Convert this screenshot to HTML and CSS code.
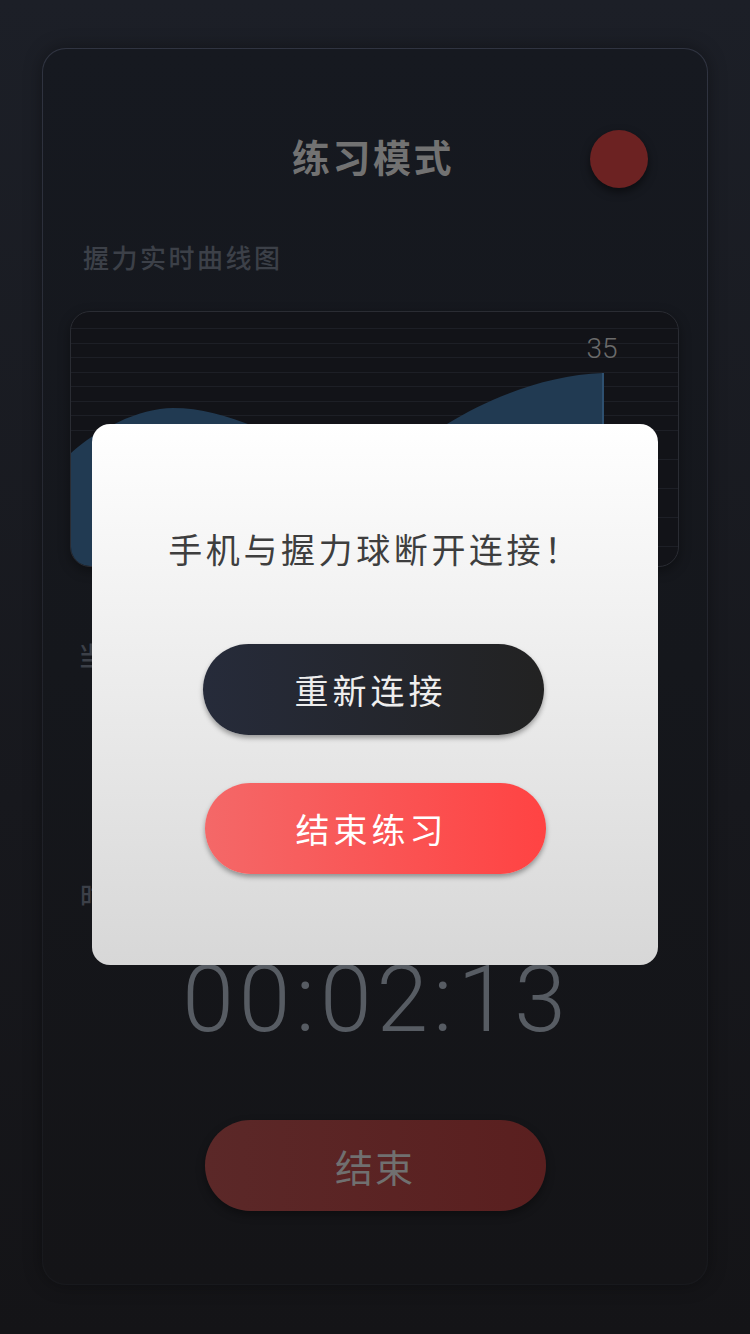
FILE: index.html
```html
<!DOCTYPE html>
<html lang="zh-CN">
<head>
<meta charset="utf-8">
<title>练习模式</title>
<link rel="stylesheet" href="styles.css">
</head>
<body>
<div class="page">
  <div class="card">
    <div class="header">
      <span class="spacer"></span>
      <h1 class="title">练习模式</h1>
      <span class="dot"></span>
    </div>
    <div class="label label-chart">握力实时曲线图</div>
    <div class="chart">
      <svg class="chart-svg" width="607" height="254" viewBox="0 0 607 254">
        <path class="area" d="M0,141 C25,118 68,96 102,96 C140,96 175,110 220,130 C262,150 300,152 340,134 C358,126 368,118 376,112 C420,85 476,63 532,61 L532,254 L0,254 Z"/>
        <line class="edge" x1="532" y1="61" x2="532" y2="254"/>
        <text class="peak" x="531" y="46" text-anchor="middle">35</text>
      </svg>
    </div>
    <div class="label label-force">当前握力</div>
    <div class="label label-time">时长</div>
    <div class="timer">00:02:13</div>
    <button class="end-btn">结束</button>
  </div>
</div>
<div class="overlay">
  <div class="modal">
    <p class="modal-msg">手机与握力球断开连接！</p>
    <button class="modal-btn reconnect">重新连接</button>
    <button class="modal-btn finish">结束练习</button>
  </div>
</div>
</body>
</html>
```
FILE: styles.css
```css
* { box-sizing: border-box; }
html, body {
  margin: 0;
  padding: 0;
}
body {
  width: 750px;
  height: 1334px;
  background: linear-gradient(to bottom, #1c1f27 0%, #17181d 60%, #141417 100%);
  font-family: "Noto Sans CJK SC", "Noto Sans", sans-serif;
  overflow: hidden;
}
.page {
  padding: 48px 42px 0;
}
.card {
  height: 1237px;
  border: 1px solid transparent;
  border-radius: 24px;
  background:
    linear-gradient(to bottom, #161920 0%, #15171c 50%, #141417 100%) padding-box,
    linear-gradient(to bottom, #303441 0%, #22242c 50%, #18191d 100%) border-box;
  box-shadow: 0 0 18px rgba(0, 0, 0, 0.35);
  display: flex;
  flex-direction: column;
}
.header {
  margin-top: 81px;
  height: 58px;
  display: grid;
  grid-template-columns: 1fr auto 1fr;
  align-items: center;
}
.title {
  margin: 0;
  font-size: 38px;
  font-weight: 700;
  letter-spacing: 2.5px;
  line-height: 58px;
  color: #727272;
  position: relative;
  top: -3px;
  left: -2px;
}
.dot {
  justify-self: end;
  margin-right: 59px;
  width: 58px;
  height: 58px;
  border-radius: 50%;
  background: #6c2222;
  box-shadow: 0 4px 8px rgba(0, 0, 0, 0.5);
}
.label {
  font-size: 26px;
  line-height: 36px;
  letter-spacing: 2.5px;
  color: #3c4048;
  font-weight: 500;
}
.label-chart {
  margin-top: 51px;
  padding-left: 40px;
}
.chart {
  margin-top: 36px;
  margin-left: 27px;
  width: 609px;
  height: 256px;
  border: 1px solid #2a2c33;
  border-radius: 20px;
  overflow: hidden;
  background-color: #121318;
  background-image: repeating-linear-gradient(to bottom, transparent 0, transparent 13.5px, #1d1f26 13.5px, #1d1f26 14.5px);
  background-position: 0 3px;
  box-shadow: 0 4px 12px rgba(0, 0, 0, 0.35);
}
.chart-svg {
  display: block;
}
.area {
  fill: #213a52;
}
.edge {
  stroke: #2e5070;
  stroke-width: 2;
}
.peak {
  font-family: "Roboto", "Noto Sans", sans-serif;
  font-weight: 300;
  font-size: 28px;
  fill: #6b6b6b;
}
.label-force {
  margin-top: 70px;
  padding-left: 35px;
}
.label-time {
  margin-top: 204px;
  padding-left: 37px;
}
.timer {
  margin-top: 37px;
  text-align: center;
  font-family: "Roboto", "Noto Sans", sans-serif;
  font-weight: 300;
  font-size: 93px;
  line-height: 100px;
  letter-spacing: 5px;
  color: #575c63;
  padding-left: 3px;
}
.end-btn {
  margin: 70px auto 0;
  width: 341px;
  height: 91px;
  border: none;
  border-radius: 46px;
  background: linear-gradient(to right, #5b2828, #5a1f1f);
  box-shadow: 0 4px 8px rgba(0, 0, 0, 0.35);
  color: #707070;
  font-family: "Noto Sans CJK SC", sans-serif;
  font-size: 38px;
  letter-spacing: 2px;
  font-weight: 400;
  padding: 0 0 0 0;
}
.overlay {
  position: fixed;
  inset: 0;
  display: flex;
  justify-content: center;
  align-items: flex-start;
  padding-top: 424px;
}
.modal {
  width: 566px;
  height: 541px;
  border-radius: 18px;
  background: linear-gradient(to bottom, #ffffff 0%, #d7d7d7 100%);
  display: flex;
  flex-direction: column;
  align-items: center;
  padding-top: 101px;
}
.modal-msg {
  margin: 0;
  font-size: 34px;
  line-height: 48px;
  letter-spacing: 3.6px;
  color: #3e3e3e;
  padding-left: 0;
}
.modal-btn {
  width: 341px;
  height: 91px;
  border: none;
  border-radius: 46px;
  font-family: "Noto Sans CJK SC", sans-serif;
  font-size: 34px;
  letter-spacing: 4px;
  padding: 0 5px 0 0;
  box-shadow: 0 3px 5px rgba(0, 0, 0, 0.35);
}
.reconnect {
  margin-top: 71px;
  margin-right: 4px;
  background: linear-gradient(to right, #262b3a, #222222);
  color: #eeeeee;
}
.finish {
  margin-top: 48px;
  background: linear-gradient(to right, #f46868, #ff4343);
  color: #ffffff;
  padding-right: 7px;
}
```
